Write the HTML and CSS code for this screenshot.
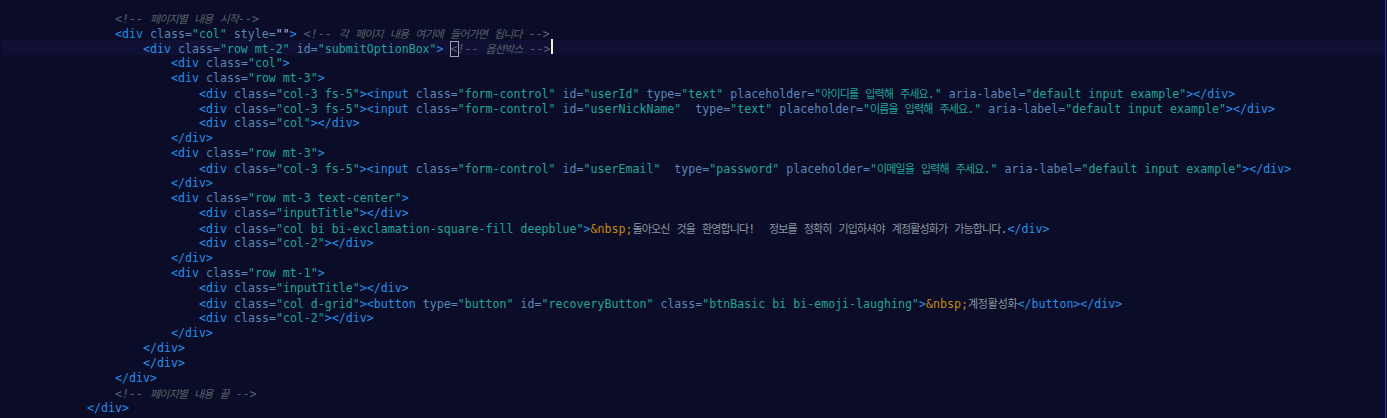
FILE: index.html
```html
<!DOCTYPE html>
<html lang="ko">
<head>
<meta charset="utf-8">
<title>Editor</title>
<link rel="stylesheet" href="styles.css">
</head>
<body>
<main class="editor">
<div class="line i4"><span class="c">&lt;!-- <span class="k">페이지별</span> <span class="k">내용</span> <span class="k">시작</span>--&gt;</span></div>
<div class="line i4"><span class="t">&lt;div</span> <span class="a">class=</span><span class="s">"col"</span> <span class="a">style=</span><span class="e">""</span><span class="t">&gt;</span> <span class="c">&lt;!-- <span class="k">각</span> <span class="k">페이지</span> <span class="k">내용</span> <span class="k">여기에</span> <span class="k">들어가면</span> <span class="k">됩니다</span> --&gt;</span></div>
<div class="line i5 active"><span class="t">&lt;div</span> <span class="a">class=</span><span class="s">"row mt-2"</span> <span class="a">id=</span><span class="s">"submitOptionBox"</span><span class="t">&gt;</span> <span class="c"><span class="bracket">&lt;</span>!-- <span class="k">옵션박스</span> --&gt;<span class="caret"></span></span></div>
<div class="line i6"><span class="t">&lt;div</span> <span class="a">class=</span><span class="s">"col"</span><span class="t">&gt;</span></div>
<div class="line i6"><span class="t">&lt;div</span> <span class="a">class=</span><span class="s">"row mt-3"</span><span class="t">&gt;</span></div>
<div class="line i7"><span class="t">&lt;div</span> <span class="a">class=</span><span class="s">"col-3 fs-5"</span><span class="t">&gt;&lt;input</span> <span class="a">class=</span><span class="s">"form-control"</span> <span class="a">id=</span><span class="s">"userId"</span> <span class="a">type=</span><span class="s">"text"</span> <span class="a">placeholder=</span><span class="s">"<span class="k">아이디를</span> <span class="k">입력해</span> <span class="k">주세요</span>."</span> <span class="a">aria-label=</span><span class="s">"default input example"</span><span class="t">&gt;&lt;/div&gt;</span></div>
<div class="line i7"><span class="t">&lt;div</span> <span class="a">class=</span><span class="s">"col-3 fs-5"</span><span class="t">&gt;&lt;input</span> <span class="a">class=</span><span class="s">"form-control"</span> <span class="a">id=</span><span class="s">"userNickName"</span>  <span class="a">type=</span><span class="s">"text"</span> <span class="a">placeholder=</span><span class="s">"<span class="k">이름을</span> <span class="k">입력해</span> <span class="k">주세요</span>."</span> <span class="a">aria-label=</span><span class="s">"default input example"</span><span class="t">&gt;&lt;/div&gt;</span></div>
<div class="line i7"><span class="t">&lt;div</span> <span class="a">class=</span><span class="s">"col"</span><span class="t">&gt;&lt;/div&gt;</span></div>
<div class="line i6"><span class="t">&lt;/div&gt;</span></div>
<div class="line i6"><span class="t">&lt;div</span> <span class="a">class=</span><span class="s">"row mt-3"</span><span class="t">&gt;</span></div>
<div class="line i7"><span class="t">&lt;div</span> <span class="a">class=</span><span class="s">"col-3 fs-5"</span><span class="t">&gt;&lt;input</span> <span class="a">class=</span><span class="s">"form-control"</span> <span class="a">id=</span><span class="s">"userEmail"</span>  <span class="a">type=</span><span class="s">"password"</span> <span class="a">placeholder=</span><span class="s">"<span class="k">이메일을</span> <span class="k">입력해</span> <span class="k">주세요</span>."</span> <span class="a">aria-label=</span><span class="s">"default input example"</span><span class="t">&gt;&lt;/div&gt;</span></div>
<div class="line i6"><span class="t">&lt;/div&gt;</span></div>
<div class="line i6"><span class="t">&lt;div</span> <span class="a">class=</span><span class="s">"row mt-3 text-center"</span><span class="t">&gt;</span></div>
<div class="line i7"><span class="t">&lt;div</span> <span class="a">class=</span><span class="s">"inputTitle"</span><span class="t">&gt;&lt;/div&gt;</span></div>
<div class="line i7"><span class="t">&lt;div</span> <span class="a">class=</span><span class="s">"col bi bi-exclamation-square-fill deepblue"</span><span class="t">&gt;</span><span class="e2">&amp;nbsp;</span><span class="x"><span class="k">돌아오신</span> <span class="k">것을</span> <span class="k">환영합니다</span>!  <span class="k">정보를</span> <span class="k">정확히</span> <span class="k">기입하셔야</span> <span class="k">계정활성화가</span> <span class="k">가능합니다</span>.</span><span class="t">&lt;/div&gt;</span></div>
<div class="line i7"><span class="t">&lt;div</span> <span class="a">class=</span><span class="s">"col-2"</span><span class="t">&gt;&lt;/div&gt;</span></div>
<div class="line i6"><span class="t">&lt;/div&gt;</span></div>
<div class="line i6"><span class="t">&lt;div</span> <span class="a">class=</span><span class="s">"row mt-1"</span><span class="t">&gt;</span></div>
<div class="line i7"><span class="t">&lt;div</span> <span class="a">class=</span><span class="s">"inputTitle"</span><span class="t">&gt;&lt;/div&gt;</span></div>
<div class="line i7"><span class="t">&lt;div</span> <span class="a">class=</span><span class="s">"col d-grid"</span><span class="t">&gt;&lt;button</span> <span class="a">type=</span><span class="s">"button"</span> <span class="a">id=</span><span class="s">"recoveryButton"</span> <span class="a">class=</span><span class="s">"btnBasic bi bi-emoji-laughing"</span><span class="t">&gt;</span><span class="e2">&amp;nbsp;</span><span class="x"><span class="k wide">계정활성화</span></span><span class="t">&lt;/button&gt;&lt;/div&gt;</span></div>
<div class="line i7"><span class="t">&lt;div</span> <span class="a">class=</span><span class="s">"col-2"</span><span class="t">&gt;&lt;/div&gt;</span></div>
<div class="line i6"><span class="t">&lt;/div&gt;</span></div>
<div class="line i5"><span class="t">&lt;/div&gt;</span></div>
<div class="line i5"><span class="t">&lt;/div&gt;</span></div>
<div class="line i4"><span class="t">&lt;/div&gt;</span></div>
<div class="line i4"><span class="c">&lt;!-- <span class="k">페이지별</span> <span class="k">내용</span> <span class="k">끝</span> --&gt;</span></div>
<div class="line i3"><span class="t">&lt;/div&gt;</span></div>
</main>
</body>
</html>
```
FILE: styles.css
```css
html, body {
  margin: 0;
  height: 100%;
  background: #0b0c28;
  overflow: hidden;
}
.editor {
  box-sizing: border-box;
  height: 100%;
  margin-right: 1px;
  padding-top: 10px;
  border-right: 1px solid #2c2cc4;
  font-family: "DejaVu Sans Mono", monospace;
  font-size: 11.62px;
  line-height: 17px;
}
.line {
  height: 15px;
  white-space: pre;
}
.i3 { padding-left: 87px; }
.i4 { padding-left: 115px; }
.i5 { padding-left: 143px; }
.i6 { padding-left: 171px; }
.i7 { padding-left: 199px; }
.active {
  margin-left: 2px;
  padding-left: 141px;
  background: #0f1034;
}
.t { color: #2690e6; }
.a { color: #5a86b8; }
.s { color: #20a698; }
.e { color: #b9b9e0; }
.e2 { color: #c48a0c; }
.c { color: #566268; font-style: italic; }
.k {
  font-family: "Noto Sans CJK KR", sans-serif;
  font-size: 11px;
  letter-spacing: -0.87px;
}
.wide { letter-spacing: -0.22px; }
.x { color: #8a98a0; font-style: normal; }
.bracket { outline: 1px solid #a0a0a8; }
.caret {
  display: inline-block;
  width: 2px;
  height: 15px;
  background: #f2f2d0;
  vertical-align: top;
  margin-top: -1px;
}
```
